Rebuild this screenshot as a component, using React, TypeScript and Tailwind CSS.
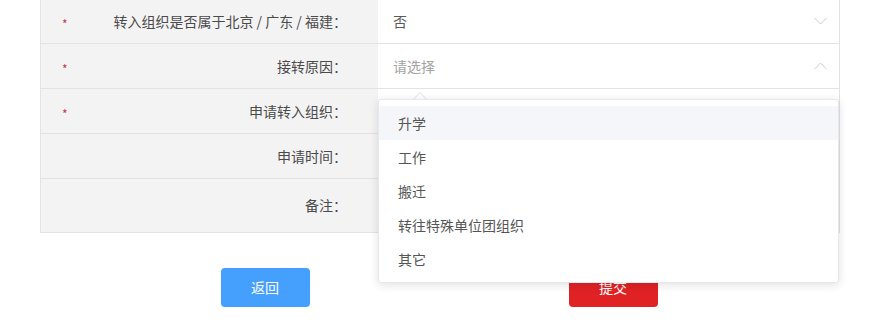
import React from 'react'

const rows = [
  { label: '转入组织是否属于北京 / 广东 / 福建：', required: true, value: '否', placeholder: false, arrow: 'down', h: 'h-[45px]' },
  { label: '接转原因：', required: true, value: '请选择', placeholder: true, arrow: 'up', h: 'h-[45px]' },
  { label: '申请转入组织：', required: true, value: '', placeholder: false, arrow: '', h: 'h-[45px]' },
  { label: '申请时间：', required: false, value: '', placeholder: false, arrow: '', h: 'h-[45px]' },
  { label: '备注：', required: false, value: '', placeholder: false, arrow: '', h: 'h-[53px]' },
]

const options = ['升学', '工作', '搬迁', '转往特殊单位团组织', '其它']

function Chevron({ up }: { up?: boolean }) {
  return (
    <svg width="13" height="8" viewBox="0 0 13 8" className="shrink-0">
      <polyline
        points={up ? '0.5,7 6.5,1 12.5,7' : '0.5,1 6.5,7 12.5,1'}
        fill="none"
        stroke="#c8cbd1"
        strokeWidth="1"
      />
    </svg>
  )
}

export default function App() {
  return (
    <div
      className="relative w-[878px] h-[334px] overflow-hidden bg-white"
      style={{ fontFamily: '"Noto Sans CJK SC", "Noto Sans", sans-serif' }}
    >
      <div className="ml-[40px] w-[800px] border-x border-b border-[#e3e3e3]">
        {rows.map((row, i) => (
          <div
            key={i}
            className={`flex ${row.h} ${i < rows.length - 1 ? 'border-b border-[#e3e3e3]' : ''} ${i === 0 ? '-mt-px' : ''}`}
          >
            <div className="relative flex w-[337px] items-center justify-end bg-[#f4f3f4] pr-[31px] text-[14px] text-[#4a4a4a]">
              {row.required && (
                <span className="absolute left-[21px] top-[calc(50%+3px)] -translate-y-1/2 text-[12px] leading-none text-[#c43a3a]">*</span>
              )}
              {row.label}
            </div>
            <div className="relative flex flex-1 items-center justify-between bg-white pl-[15px] pr-[12px] text-[14px]">
              <span className={row.placeholder ? 'text-[#a3a3a3]' : 'text-[#5a5a5a]'}>{row.value}</span>
              {row.arrow && <Chevron up={row.arrow === 'up'} />}
              {i === 1 && (
                <div className="absolute left-0 top-[55px] z-10 w-[461px]">
                  <div className="absolute left-[37px] -top-[5px] h-[10px] w-[10px] rotate-45 border-l border-t border-[#e6e8ee] bg-white" />
                  <div className="relative rounded-[3px] border border-[#e6e8ee] bg-white py-[6px] shadow-[0_2px_10px_rgba(0,0,0,0.12)]">
                    {options.map((opt, j) => (
                      <div
                        key={opt}
                        className={`flex h-[34px] items-center px-[19px] text-[14px] text-[#555] ${j === 0 ? 'bg-[#f5f6f9]' : ''}`}
                      >
                        {opt}
                      </div>
                    ))}
                  </div>
                </div>
              )}
            </div>
          </div>
        ))}
      </div>

      <div className="mt-[35px] flex justify-center gap-[259px]">
        <button className="h-[39px] w-[89px] rounded-[4px] bg-[#45a0fd] text-[14px] text-white">返回</button>
        <button className="h-[39px] w-[89px] rounded-[4px] bg-[#e02225] text-[14px] text-white">提交</button>
      </div>
    </div>
  )
}
